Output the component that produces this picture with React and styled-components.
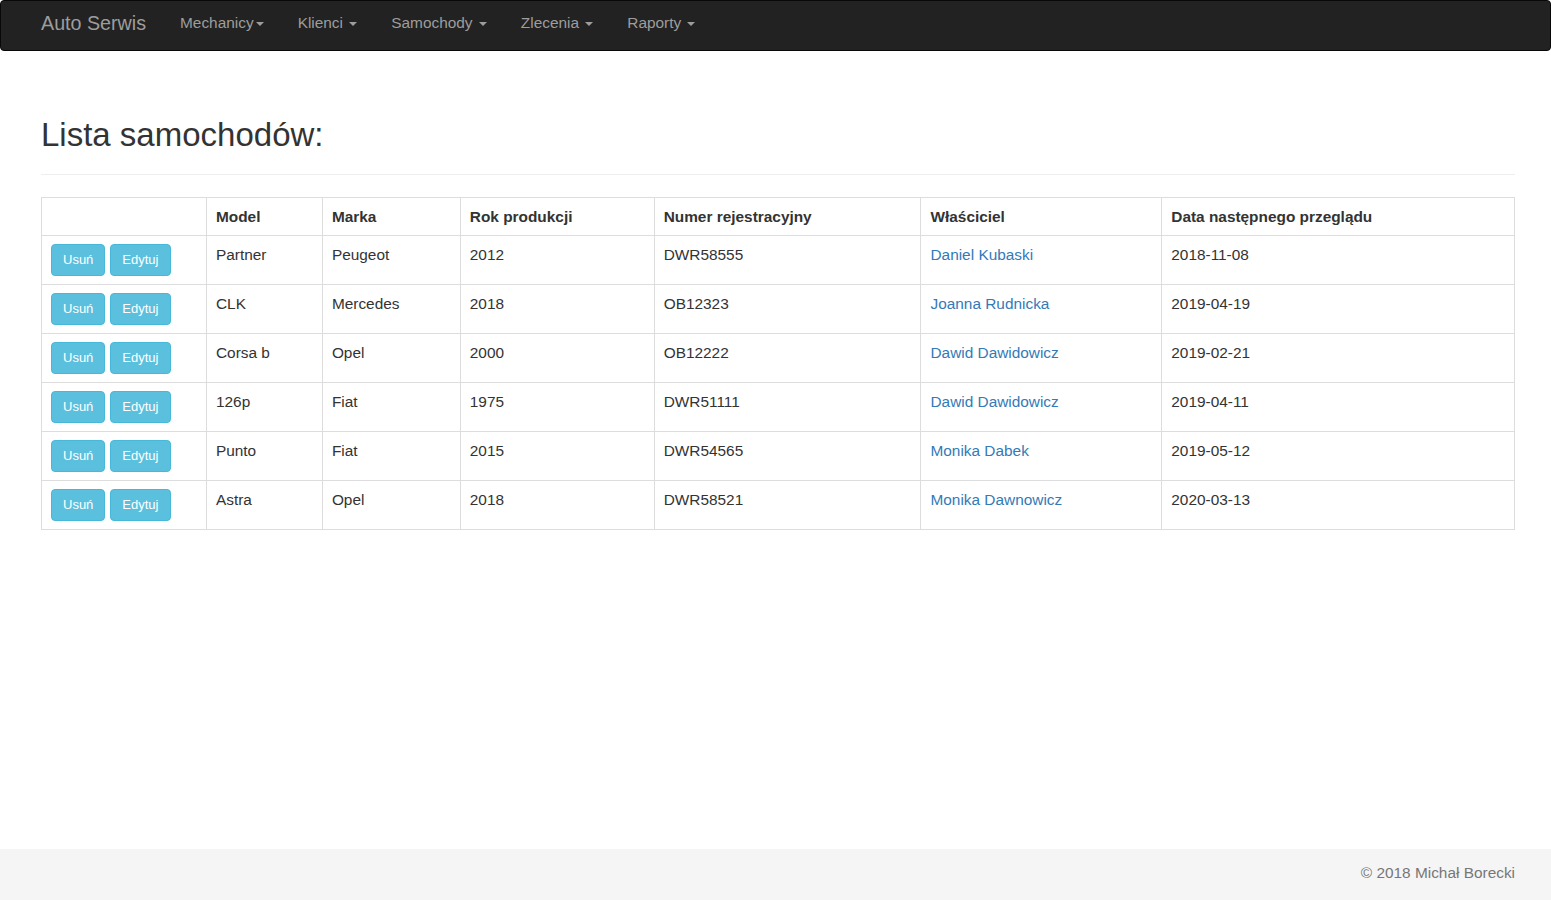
import React from 'react'
import styled, { createGlobalStyle } from 'styled-components'

const GlobalStyle = createGlobalStyle`
  html, body {
    margin: 0;
    padding: 0;
  }
  body {
    font-family: "Liberation Sans", Arial, Helvetica, sans-serif;
    font-size: 15.4px;
    line-height: 21px;
    color: #333;
    background: #fff;
  }
  * {
    box-sizing: border-box;
  }
`

const Page = styled.div`
  min-height: 100vh;
  display: flex;
  flex-direction: column;
`

const Navbar = styled.nav`
  height: 51px;
  background: #222;
  border: 1px solid #080808;
  border-radius: 4px;
  display: flex;
  align-items: flex-start;
  padding-left: 40px;
`

const Brand = styled.a`
  font-size: 19.7px;
  line-height: 20px;
  color: #9d9d9d;
  text-decoration: none;
  padding: 12px 17px 18px 0;
`

const NavList = styled.ul`
  list-style: none;
  margin: 0;
  padding: 0;
  display: flex;
`

const NavLink = styled.a`
  display: block;
  font-size: 15.4px;
  line-height: 20px;
  color: #9d9d9d;
  text-decoration: none;
  padding: 12px 17px 18px;
`

const Caret = styled.span`
  display: inline-block;
  width: 0;
  height: 0;
  margin-left: 2px;
  vertical-align: middle;
  border-top: 4px solid #9d9d9d;
  border-left: 4px solid transparent;
  border-right: 4px solid transparent;
`

const Main = styled.main`
  flex: 1;
  padding: 66px 36px 20px 41px;
`

const PageHeader = styled.div`
  padding-bottom: 21px;
  border-bottom: 1px solid #eee;
  margin-bottom: 22px;
`

const Title = styled.h1`
  margin: 0;
  font-size: 33px;
  font-weight: 400;
  line-height: 1.1;
  color: #333;
`

const Table = styled.table`
  width: 100%;
  border-collapse: collapse;
  border: 1px solid #ddd;
`

const Th = styled.th`
  text-align: left;
  font-weight: 700;
  padding: 8px 9px;
  border: 1px solid #ddd;
  vertical-align: bottom;
`

const Td = styled.td`
  padding: 8px 9px;
  border: 1px solid #ddd;
  vertical-align: top;
`

const Actions = styled.div`
  display: flex;
  gap: 5px;
`

const Button = styled.button`
  font-family: inherit;
  font-size: 13px;
  line-height: 18px;
  padding: 6px 11px;
  color: #fff;
  background: #5bc0de;
  border: 1px solid #46b8da;
  border-radius: 4px;
  cursor: pointer;
`

const Link = styled.a`
  color: #337ab7;
  text-decoration: none;
`

const Footer = styled.footer`
  height: 51px;
  background: #f5f5f5;
  padding: 13px 36px 0 41px;
  text-align: right;
  color: #777;
`

const menu = [
  { label: 'Mechanicy', space: false },
  { label: 'Klienci', space: true },
  { label: 'Samochody', space: true },
  { label: 'Zlecenia', space: true },
  { label: 'Raporty', space: true },
]

const cols = [
  { title: '', width: 165 },
  { title: 'Model', width: 116 },
  { title: 'Marka', width: 138 },
  { title: 'Rok produkcji', width: 194 },
  { title: 'Numer rejestracyjny', width: 267 },
  { title: 'Właściciel', width: 241 },
  { title: 'Data następnego przeglądu', width: 353 },
]

const cars = [
  ['Partner', 'Peugeot', '2012', 'DWR58555', 'Daniel Kubaski', '2018-11-08'],
  ['CLK', 'Mercedes', '2018', 'OB12323', 'Joanna Rudnicka', '2019-04-19'],
  ['Corsa b', 'Opel', '2000', 'OB12222', 'Dawid Dawidowicz', '2019-02-21'],
  ['126p', 'Fiat', '1975', 'DWR51111', 'Dawid Dawidowicz', '2019-04-11'],
  ['Punto', 'Fiat', '2015', 'DWR54565', 'Monika Dabek', '2019-05-12'],
  ['Astra', 'Opel', '2018', 'DWR58521', 'Monika Dawnowicz', '2020-03-13'],
]

const App = () => {
  return (
    <Page>
      <GlobalStyle />
      <Navbar>
        <Brand href="#">Auto Serwis</Brand>
        <NavList>
          {menu.map((m) => (
            <li key={m.label}>
              <NavLink href="#">
                {m.label}
                {m.space ? ' ' : ''}
                <Caret />
              </NavLink>
            </li>
          ))}
        </NavList>
      </Navbar>
      <Main>
        <PageHeader>
          <Title>Lista samochodów:</Title>
        </PageHeader>
        <Table>
          <colgroup>
            {cols.map((c, i) => (
              <col key={i} style={{ width: c.width }} />
            ))}
          </colgroup>
          <thead>
            <tr>
              {cols.map((c, i) => (
                <Th key={i}>{c.title}</Th>
              ))}
            </tr>
          </thead>
          <tbody>
            {cars.map((car, i) => (
              <tr key={i}>
                <Td>
                  <Actions>
                    <Button>Usuń</Button>
                    <Button>Edytuj</Button>
                  </Actions>
                </Td>
                <Td>{car[0]}</Td>
                <Td>{car[1]}</Td>
                <Td>{car[2]}</Td>
                <Td>{car[3]}</Td>
                <Td>
                  <Link href="#">{car[4]}</Link>
                </Td>
                <Td>{car[5]}</Td>
              </tr>
            ))}
          </tbody>
        </Table>
      </Main>
      <Footer>© 2018 Michał Borecki</Footer>
    </Page>
  )
}

export default App
